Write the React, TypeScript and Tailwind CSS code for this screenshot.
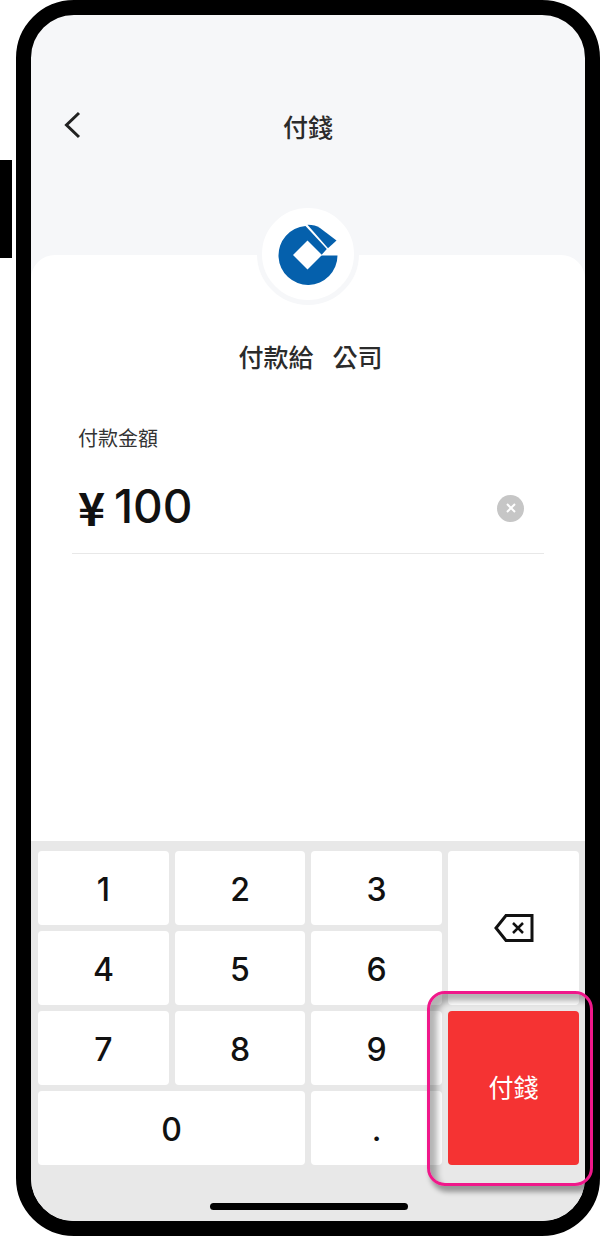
const keys = ["1", "2", "3", "4", "5", "6", "7", "8", "9"];

function Logo() {
  return (
    <svg viewBox="0 0 76 76" className="h-[76px] w-[76px]" fill="#0560ac">
      <path d="M67.500 39.500A29.500 29.500 0 1 1 35.500 10L56.800 33 51 39.500Z" />
      <path d="M37.500 8.800Q45 8.700 50 12L66.500 24.500 58 32.300Z" />
      <path d="M37.500 24.500 52 39 37.500 53.500 23 39Z" fill="white" />
    </svg>
  );
}

export default function App() {
  return (
    <div className="relative flex h-[1236px] w-[600px] items-start overflow-hidden bg-white font-['Noto_Sans_CJK_TC',sans-serif]">
      <div className="mt-[160px] h-[98px] w-3 bg-black" />
      <div className="ml-1 flex h-[1236px] w-[584px] flex-col overflow-hidden rounded-[58px] border-[15px] border-black bg-[#f6f7f9]">
        <div className="relative h-[240px] shrink-0">
          <svg viewBox="0 0 24 32" className="absolute left-[30px] top-[94px] h-8 w-6" fill="none" stroke="#222" strokeWidth="3">
            <path d="M18 4 5.500 16 18 28" />
          </svg>
          <p className="pt-[93px] text-center text-[25px] leading-[36px] font-medium text-[#2b2b2b]">付錢</p>
        </div>
        <div className="relative flex flex-1 flex-col rounded-t-[24px] bg-white px-[41px]">
          <div className="absolute left-[226px] top-[-52px] flex h-[102px] w-[102px] items-center justify-center rounded-full border-[5px] border-[#f6f7f9] bg-white">
            <Logo />
          </div>
          <p className="mt-[83px] flex justify-center gap-[19px] pl-[5px] text-[25px] leading-[36px] font-medium text-[#2b2b2b]">
            <span>付款給</span>
            <span>公司</span>
          </p>
          <p className="mt-[49px] pl-[6px] text-[20px] leading-[30px] text-[#333]">付款金額</p>
          <div className="mt-[10px] flex h-[91px] items-center justify-between border-b border-[#e8e8e8]">
            <span className="flex items-center pb-[4px] pl-[6px] text-[46px] leading-[60px] font-medium text-[#111]">
              <span className="w-[36px] font-bold">¥</span>
              <span className="font-['Inter',sans-serif]">100</span>
            </span>
            <span className="mr-[20px] flex h-[27px] w-[27px] items-center justify-center rounded-full bg-[#c6c6c6]">
              <svg viewBox="0 0 12 12" className="h-3 w-3" stroke="white" strokeWidth="2">
                <path d="m2 2 8 8M10 2l-8 8" />
              </svg>
            </span>
          </div>
        </div>
        <div className="relative h-[380px] shrink-0 bg-[#e8e8e8] pl-[7px] pr-[6px] pt-[10px]">
          <div className="grid grid-cols-[131px_130px_131px_131px] grid-rows-[repeat(4,74px)] gap-[6px] font-['Inter',sans-serif]">
            {keys.map((k, i) => (
              <div
                key={k}
                className="flex items-center justify-center rounded-[4px] bg-white pt-[4px] text-[32px] font-[550] text-[#111]"
                style={{ gridColumn: (i % 3) + 1, gridRow: Math.floor(i / 3) + 1 }}
              >
                {k}
              </div>
            ))}
            <div className="col-start-1 col-end-3 row-start-4 flex items-center justify-center rounded-[4px] bg-white pt-[4px] text-[32px] font-[550] text-[#111]">0</div>
            <div className="col-start-3 row-start-4 flex items-center justify-center rounded-[4px] bg-white pt-[4px] text-[32px] font-[550] text-[#111]">.</div>
            <div className="col-start-4 row-start-1 row-end-3 flex items-center justify-center rounded-[4px] bg-white">
              <svg viewBox="0 0 40 28" className="h-7 w-10" fill="none" stroke="#111" strokeWidth="3">
                <path d="M12 1.500h26v25H12L2 14Z" />
                <path d="m19 9 10 10M29 9 19 19" strokeWidth="2.500" />
              </svg>
            </div>
            <div className="col-start-4 row-start-3 row-end-5 flex items-center justify-center rounded-[4px] bg-[#f53333] pb-[2px] font-['Noto_Sans_CJK_TC',sans-serif] text-[25px] text-white">付錢</div>
          </div>
          <div className="mx-auto mt-[38px] h-[7px] w-[198px] rounded-full bg-black" />
        </div>
      </div>
      <div className="absolute left-[427px] top-[991px] h-[195px] w-[166px] rounded-[18px] border-[3px] border-[#f0188a] shadow-[inset_7px_7px_6px_rgba(0,0,0,0.3),3px_6px_5px_rgba(0,0,0,0.35)]" />
    </div>
  );
}
